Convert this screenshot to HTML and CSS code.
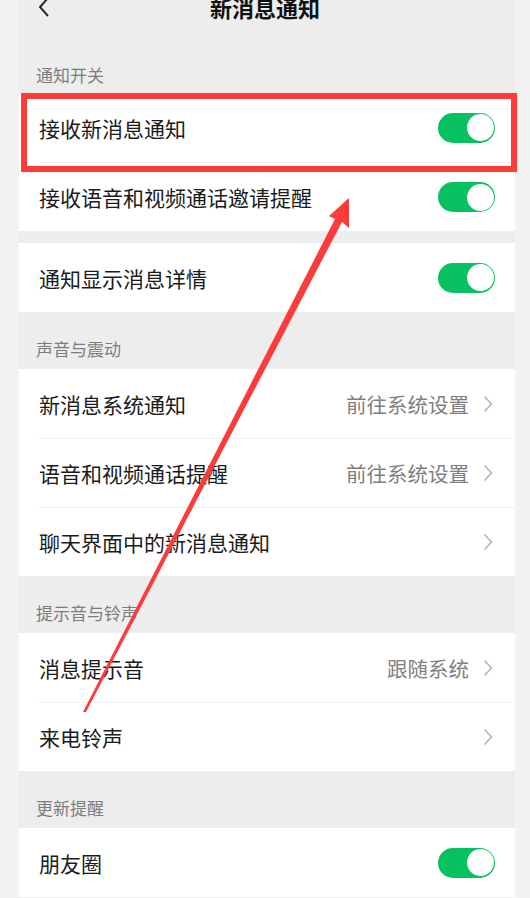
FILE: index.html
```html
<!DOCTYPE html>
<html lang="zh-CN">
<head>
<meta charset="utf-8">
<title>新消息通知</title>
<link rel="stylesheet" href="styles.css">
</head>
<body>
<div class="page">
  <div class="header">
    <div class="back">
      <svg width="12" height="20" viewBox="0 0 12 20"><path d="M10 1 L2 10 L10 19" fill="none" stroke="#2a2a2a" stroke-width="2"/></svg>
    </div>
    <div class="title">新消息通知</div>
    <div></div>
  </div>

  <div class="label label-first">通知开关</div>
  <div class="group">
    <div class="row"><span class="row-title">接收新消息通知</span><span class="switch"><span class="knob"></span></span></div>
    <div class="row"><span class="row-title">接收语音和视频通话邀请提醒</span><span class="switch"><span class="knob"></span></span></div>
  </div>
  <div class="spacer"></div>
  <div class="group">
    <div class="row"><span class="row-title">通知显示消息详情</span><span class="switch"><span class="knob"></span></span></div>
  </div>

  <div class="label">声音与震动</div>
  <div class="group">
    <div class="row"><span class="row-title">新消息系统通知</span><span class="right"><span class="value">前往系统设置</span><svg class="chev" width="10" height="18" viewBox="0 0 10 18"><path d="M1.5 1.5 L8.5 9 L1.5 16.5" fill="none" stroke="#b4b4b4" stroke-width="1.6"/></svg></span></div>
    <div class="row"><span class="row-title">语音和视频通话提醒</span><span class="right"><span class="value">前往系统设置</span><svg class="chev" width="10" height="18" viewBox="0 0 10 18"><path d="M1.5 1.5 L8.5 9 L1.5 16.5" fill="none" stroke="#b4b4b4" stroke-width="1.6"/></svg></span></div>
    <div class="row"><span class="row-title">聊天界面中的新消息通知</span><span class="right"><svg class="chev" width="10" height="18" viewBox="0 0 10 18"><path d="M1.5 1.5 L8.5 9 L1.5 16.5" fill="none" stroke="#b4b4b4" stroke-width="1.6"/></svg></span></div>
  </div>

  <div class="label">提示音与铃声</div>
  <div class="group">
    <div class="row"><span class="row-title">消息提示音</span><span class="right"><span class="value">跟随系统</span><svg class="chev" width="10" height="18" viewBox="0 0 10 18"><path d="M1.5 1.5 L8.5 9 L1.5 16.5" fill="none" stroke="#b4b4b4" stroke-width="1.6"/></svg></span></div>
    <div class="row"><span class="row-title">来电铃声</span><span class="right"><svg class="chev" width="10" height="18" viewBox="0 0 10 18"><path d="M1.5 1.5 L8.5 9 L1.5 16.5" fill="none" stroke="#b4b4b4" stroke-width="1.6"/></svg></span></div>
  </div>

  <div class="label">更新提醒</div>
  <div class="group">
    <div class="row"><span class="row-title">朋友圈</span><span class="switch"><span class="knob"></span></span></div>
  </div>
</div>

<div class="highlight"></div>
<svg class="arrow" width="530" height="898" viewBox="0 0 530 898">
  <polygon points="349,198 329,216 335,219 83,712 86,712 342,222 349,228" fill="#fc3b3b"/>
</svg>
</body>
</html>
```

FILE: styles.css
```css
html, body {
  margin: 0;
  padding: 0;
}
body {
  background: #f2f2f2;
  font-family: "Noto Sans CJK SC", "Noto Sans", sans-serif;
  width: 530px;
  height: 898px;
  overflow: hidden;
  position: relative;
}
.page {
  margin-left: 19px;
  width: 496px;
  height: 898px;
  background: #ededed;
  overflow: hidden;
}
.header {
  margin-top: -15px;
  height: 44px;
  display: grid;
  grid-template-columns: 1fr auto 1fr;
  align-items: center;
}
.back {
  padding-left: 19px;
  display: flex;
  align-items: center;
}
.title {
  font-size: 22px;
  line-height: 44px;
  font-weight: 600;
  color: #111;
  margin-left: -4px;
}
.label {
  height: 57px;
  box-sizing: border-box;
  display: flex;
  align-items: flex-end;
  padding-left: 17px;
  padding-bottom: 10px;
  font-size: 17px;
  line-height: 20px;
  color: #7d7d7d;
}
.label-first {
  height: 64px;
  padding-bottom: 8px;
}
.spacer {
  height: 12px;
}
.group {
  background: #fff;
  padding-left: 20px;
}
.row {
  height: 69px;
  box-sizing: border-box;
  padding-right: 20px;
  display: flex;
  align-items: center;
  justify-content: space-between;
}
.row + .row {
  border-top: 1px solid #f0f0f0;
}
.row-title {
  font-size: 21px;
  color: #1b1b1b;
  line-height: 24px;
}
.right {
  display: flex;
  align-items: center;
}
.value {
  font-size: 20.5px;
  color: #7f7f7f;
  line-height: 24px;
  margin-right: 14px;
}
.chev {
  display: block;
  margin-right: 2px;
}
.switch {
  width: 57px;
  height: 30px;
  border-radius: 15px;
  background: #07c160;
  display: flex;
  align-items: center;
  justify-content: flex-end;
  padding-right: 1.5px;
  box-sizing: border-box;
}
.knob {
  width: 27px;
  height: 27px;
  border-radius: 50%;
  background: #fff;
}
.highlight {
  position: absolute;
  left: 21px;
  top: 93px;
  width: 496px;
  height: 79px;
  box-sizing: border-box;
  border: 6.5px solid #fc3b3b;
}
.arrow {
  position: absolute;
  left: 0;
  top: 0;
  pointer-events: none;
}
```
